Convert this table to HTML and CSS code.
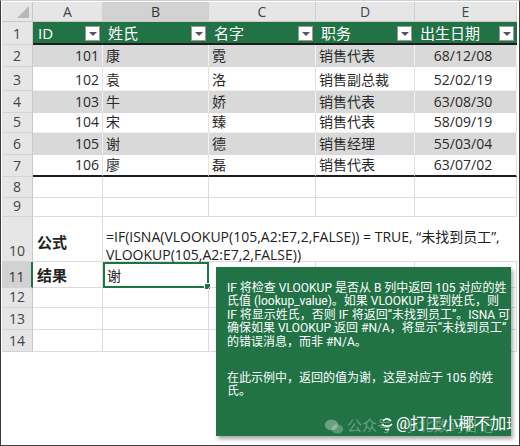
FILE: index.html
```html
<!DOCTYPE html>
<html>
<head>
<meta charset="utf-8">
<link rel="stylesheet" href="styles.css">
</head>
<body>
<div class="frame">
  <div class="sheet">
    <div class="corner"><span class="tri"></span></div>
    <div class="ch">A</div>
    <div class="ch sel">B</div>
    <div class="ch">C</div>
    <div class="ch">D</div>
    <div class="ch">E</div>

    <div class="rh">1</div>
    <div class="th">ID<span class="flt"></span></div>
    <div class="th">姓氏<span class="flt"></span></div>
    <div class="th">名字<span class="flt"></span></div>
    <div class="th">职务<span class="flt"></span></div>
    <div class="th">出生日期<span class="flt"></span></div>

    <div class="rh">2</div>
    <div class="td band num">101</div><div class="td band">康</div><div class="td band">霓</div><div class="td band">销售代表</div><div class="td band ctr">68/12/08</div>
    <div class="rh">3</div>
    <div class="td num">102</div><div class="td">袁</div><div class="td">洛</div><div class="td">销售副总裁</div><div class="td ctr">52/02/19</div>
    <div class="rh">4</div>
    <div class="td band num">103</div><div class="td band">牛</div><div class="td band">娇</div><div class="td band">销售代表</div><div class="td band ctr">63/08/30</div>
    <div class="rh">5</div>
    <div class="td num">104</div><div class="td">宋</div><div class="td">臻</div><div class="td">销售代表</div><div class="td ctr">58/09/19</div>
    <div class="rh">6</div>
    <div class="td band num">105</div><div class="td band">谢</div><div class="td band">德</div><div class="td band">销售经理</div><div class="td band ctr">55/03/04</div>
    <div class="rh">7</div>
    <div class="td last num">106</div><div class="td last">廖</div><div class="td last">磊</div><div class="td last">销售代表</div><div class="td last ctr">63/07/02</div>

    <div class="rh">8</div>
    <div class="c"></div><div class="c"></div><div class="c"></div><div class="c"></div><div class="c"></div>
    <div class="rh">9</div>
    <div class="c"></div><div class="c"></div><div class="c"></div><div class="c"></div><div class="c"></div>

    <div class="rh">10</div>
    <div class="c label mid">公式</div>
    <div class="c formula">=IF(ISNA(VLOOKUP(105,A2:E7,2,FALSE)) = TRUE, “未找到员工”,<br>VLOOKUP(105,A2:E7,2,FALSE))</div>

    <div class="rh rsel">11</div>
    <div class="c label">结果</div>
    <div class="c active">谢<span class="handle"></span></div>
    <div class="c"></div><div class="c"></div><div class="c"></div>

    <div class="rh">12</div>
    <div class="c"></div><div class="c"></div><div class="c"></div><div class="c"></div><div class="c"></div>
    <div class="rh">13</div>
    <div class="c"></div><div class="c"></div><div class="c"></div><div class="c"></div><div class="c"></div>
    <div class="rh">14</div>
    <div class="c"></div><div class="c"></div><div class="c"></div><div class="c"></div><div class="c"></div>
  </div>

  <div class="callout">
    <p class="para">IF 将检查 VLOOKUP 是否从 B 列中返回 105 对应的姓<br>氏值 (lookup_value)。如果 VLOOKUP 找到姓氏，则<br>IF 将显示姓氏，否则 IF 将返回“未找到员工”。ISNA 可<br>确保如果 VLOOKUP 返回 #N/A，将显示“未找到员工”<br>的错误消息，而非 #N/A。</p>
    <p class="para">在此示例中，返回的值为谢，这是对应于 105 的姓<br>氏。</p>
    <div class="wm">
      <span class="wm-faint"><svg class="wx" viewBox="0 0 24 20" width="20" height="17"><ellipse cx="9" cy="8" rx="8" ry="6.5" fill="currentColor"/><ellipse cx="16" cy="13" rx="7" ry="5.5" fill="currentColor" opacity="0.8"/></svg>公众号 · 小北数码日记</span>
      <span class="wm-main"><svg class="tt" viewBox="0 0 14 14" width="14" height="14"><path d="M3 4 C5 1 9 1 11 4 M2 7 C4 10 10 10 12 7 M5 12 C6 13 8 13 9 12" stroke="#fff" stroke-width="1.4" fill="none"/></svg>@打工小椰不加班</span>
    </div>
  </div>
</div>
</body>
</html>
```

FILE: styles.css
```css
html, body {
  margin: 0;
  padding: 0;
  background: #fff;
}

.frame {
  position: relative;
  width: 520px;
  height: 446px;
  box-sizing: border-box;
  border: 1px solid #3c3c3c;
  border-top-color: #d0d0d0;
  padding: 1px 0 0 1px;
  overflow: hidden;
  font-family: "Open Sans", "Noto Sans CJK SC", sans-serif;
  color: #222;
}

.sheet {
  display: grid;
  grid-template-columns: 31px 70px 106px 107px 99px 102px;
  grid-template-rows: 20px 23px 22px 24px 22px 20px 22px 22px 21px 19px 45px 26px 20px 22px 22px;
  font-size: 14px;
}

.sheet > div {
  box-sizing: border-box;
  position: relative;
}

.corner {
  background: #e6e6e6;
  border-right: 1px solid #c8c8c8;
  border-bottom: 1px solid #c8c8c8;
}
.tri {
  position: absolute;
  right: 3px;
  bottom: 3px;
  width: 0;
  height: 0;
  border-left: 12px solid transparent;
  border-bottom: 12px solid #b8b8b8;
}

.ch {
  background: #e6e6e6;
  border-right: 1px solid #d0d0d0;
  border-bottom: 1px solid #c8c8c8;
  color: #444;
  display: flex;
  align-items: center;
  justify-content: center;
  font-size: 14px;
}
.ch.sel {
  background: #d2d2d2;
  color: #333;
}

.rh {
  background: #e6e6e6;
  border-right: 1px solid #c8c8c8;
  border-bottom: 1px solid #d4d4d4;
  color: #444;
  display: flex;
  align-items: flex-end;
  justify-content: center;
  padding-bottom: 1px;
  font-size: 14px;
}
.rh.rsel {
  background: #d2d2d2;
  border-right: 2px solid #217346;
  color: #333;
}

.th {
  background: #217346;
  color: #fff;
  border-bottom: 2px solid #1d1d1d;
  display: flex;
  align-items: center;
  padding-left: 5px;
  font-size: 15px;
}
.flt {
  position: absolute;
  right: 3px;
  top: 4px;
  width: 15px;
  height: 15px;
  box-sizing: border-box;
  background: #fff;
  border: 1px solid #999;
}
.flt::after {
  content: "";
  position: absolute;
  left: 3px;
  top: 5px;
  border-left: 4px solid transparent;
  border-right: 4px solid transparent;
  border-top: 4px solid #555;
}

.td {
  border-right: 1px solid #e2e2e2;
  border-bottom: 1px solid #f0f0f0;
  display: flex;
  align-items: flex-end;
  padding: 0 3px 1px 3px;
  white-space: nowrap;
  color: #2a2a2a;
}
.td.band {
  background: #d9d9d9;
  border-right-color: #f2f2f2;
  border-bottom-color: #d9d9d9;
}
.td.num { justify-content: flex-end; }
.td.ctr { justify-content: center; padding-right: 8px; }
.td.last { border-bottom: 2px solid #1d1d1d; }

.c {
  border-right: 1px solid #dcdcdc;
  border-bottom: 1px solid #dcdcdc;
  display: flex;
  align-items: flex-end;
  padding: 0 3px 1px 3px;
  white-space: nowrap;
}
.c.label {
  font-weight: bold;
  font-size: 15px;
  align-items: center;
  padding-left: 4px;
}
.c.mid { padding-top: 6px; }

.formula {
  grid-column: 3 / 7;
  align-items: flex-start;
  padding-top: 11px;
  padding-left: 3px;
  line-height: 18px;
  font-size: 14px;
  color: #222;
  border-right: none;
}

.active {
  border: 2px solid #217346;
  padding: 0 2px 1px 2px;
}
.handle {
  position: absolute;
  right: -4px;
  bottom: -4px;
  width: 5px;
  height: 5px;
  background: #217346;
  border: 1px solid #fff;
}

.callout {
  position: absolute;
  left: 215px;
  top: 266px;
  width: 295px;
  height: 169px;
  background: #217346;
  color: #fff;
  box-shadow: 2px 3px 4px rgba(0, 0, 0, 0.35);
  padding: 15px 6px 0 11px;
  box-sizing: border-box;
  font-family: Roboto, "Noto Sans CJK SC", sans-serif;
  font-size: 12px;
  line-height: 13.4px;
  overflow: hidden;
}
.para {
  margin: 0 0 23px 0;
  white-space: nowrap;
}

.wm {
  position: absolute;
  left: 108px;
  top: 151px;
  white-space: nowrap;
  font-size: 15px;
}
.wm-faint {
  color: rgba(255, 255, 255, 0.32);
  display: inline-flex;
  align-items: center;
  gap: 3px;
}
.wx { color: rgba(255, 255, 255, 0.32); }
.wm-main {
  position: absolute;
  left: 56px;
  top: -1px;
  color: #fff;
  font-size: 16px;
  display: inline-flex;
  align-items: center;
  gap: 2px;
}
```
